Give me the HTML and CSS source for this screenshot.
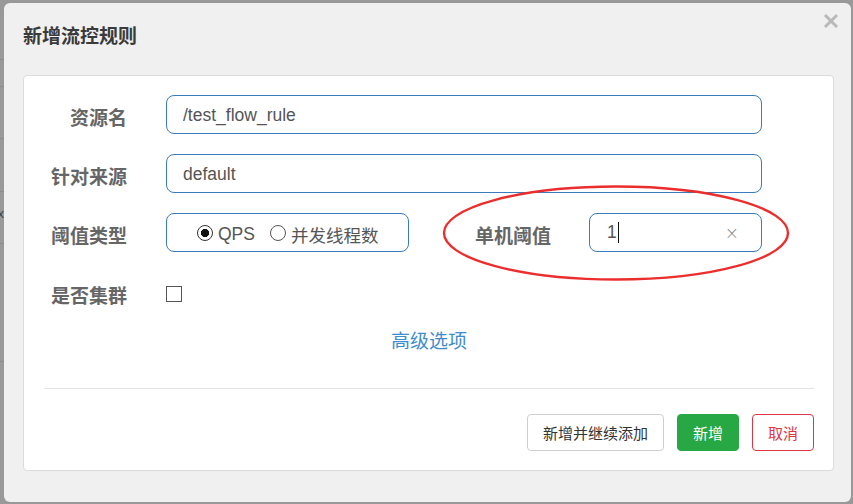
FILE: index.html
```html
<!DOCTYPE html>
<html lang="zh-CN">
<head>
  <meta charset="UTF-8">
  <meta name="viewport" content="width=device-width, initial-scale=1.0">
  <title>新增流控规则</title>
  <link rel="stylesheet" href="styles.css">
</head>
<body>
  <div class="backdrop-strip">
    <div class="strip-row" style="height: 60px"></div>
    <div class="strip-row" style="height: 27px"></div>
    <div class="strip-row" style="height: 52px"></div>
    <div class="strip-row" style="height: 53px"></div>
    <div class="strip-row strip-text" style="height: 52px">x</div>
    <div class="strip-row" style="height: 118px"></div>
  </div>

  <div class="modal">
    <div class="modal-header">
      <h3 class="modal-title">新增流控规则</h3>
      <button class="close-btn" aria-label="关闭">
        <svg width="16" height="16" viewBox="0 0 16 16">
          <path d="M2 2 L14 14 M14 2 L2 14" stroke="#b9b9b9" stroke-width="3" fill="none"/>
        </svg>
      </button>
    </div>

    <div class="panel">
      <form class="rule-form">
        <div class="form-row">
          <label class="form-label">资源名</label>
          <input class="text-input wide" type="text" value="/test_flow_rule">
        </div>

        <div class="form-row">
          <label class="form-label">针对来源</label>
          <input class="text-input wide" type="text" value="default">
        </div>

        <div class="form-row">
          <label class="form-label">阈值类型</label>
          <div class="radio-box">
            <label class="radio-item"><input type="radio" name="grade" checked> <span>QPS</span></label>
            <label class="radio-item"><input type="radio" name="grade"> <span>并发线程数</span></label>
          </div>
          <label class="form-label second">单机阈值</label>
          <div class="text-input clearable">
            <span class="value">1</span><span class="caret"></span>
            <span class="clear">×</span>
          </div>
        </div>

        <div class="form-row cluster-row">
          <label class="form-label">是否集群</label>
          <input class="check" type="checkbox">
        </div>

        <div class="advanced"><a href="#">高级选项</a></div>
      </form>

      <div class="divider"></div>

      <div class="footer">
        <button class="btn btn-default">新增并继续添加</button>
        <button class="btn btn-success">新增</button>
        <button class="btn btn-cancel">取消</button>
      </div>
    </div>
  </div>

  <svg class="annotation" width="352" height="100" viewBox="0 0 352 100">
    <ellipse cx="175" cy="49" rx="172" ry="46.5" stroke="#ec2d2d" stroke-width="2.4" fill="none"/>
  </svg>
</body>
</html>
```

FILE: styles.css
```css
* {
  box-sizing: border-box;
  margin: 0;
  padding: 0;
}

body {
  display: flex;
  height: 504px;
  overflow: hidden;
  background: #999999;
  font-family: 'Liberation Sans', 'Noto Sans CJK SC', sans-serif;
  color: #555;
  position: relative;
}

.backdrop-strip {
  width: 4px;
  flex: none;
}

.strip-row {
  border-bottom: 1px solid #8d8d8d;
  overflow: hidden;
}

.strip-text {
  font-size: 13px;
  color: #444;
  text-align: right;
  line-height: 44px;
  white-space: nowrap;
  direction: rtl;
}

.modal {
  width: 847px;
  height: 499px;
  margin-top: 3px;
  padding: 0 17px 0 19px;
  background: #f0f0f0;
  border-radius: 6px;
}

.modal-header {
  display: flex;
  justify-content: space-between;
  align-items: flex-start;
  height: 72px;
  padding-top: 10px;
}

.modal-title {
  margin-top: 10px;
  font-size: 19px;
  line-height: 27px;
  font-weight: bold;
  color: #3a3a3a;
}

.close-btn {
  margin-top: 0;
  margin-right: -5px;
  background: none;
  border: none;
  line-height: 0;
}

.panel {
  background: #ffffff;
  border: 1px solid #dcdcdc;
  border-radius: 4px;
  padding: 19px 19px 19px 20px;
}

.form-row {
  display: flex;
  align-items: center;
  height: 39px;
  margin-bottom: 20px;
}

.form-label {
  width: 83px;
  margin-right: 39px;
  padding-top: 4px;
  text-align: right;
  font-size: 19px;
  font-weight: bold;
  color: #666;
  white-space: nowrap;
}

.form-label.second {
  width: 142px;
  margin-right: 38px;
}

.text-input {
  height: 39px;
  border: 1px solid #3a7cbd;
  border-radius: 8px;
  padding: 2px 16px 0;
  font-family: 'Liberation Sans', 'Noto Sans CJK SC', sans-serif;
  font-size: 17.5px;
  color: #555;
  outline: none;
}

.text-input.wide {
  width: 596px;
}

.clearable {
  width: 173px;
  display: flex;
  align-items: center;
  padding: 0 0 0 17px;
}

.caret {
  display: inline-block;
  width: 1px;
  height: 21px;
  margin-left: 1px;
  background: #111;
}

.clear {
  margin-left: auto;
  margin-right: 22px;
  font-size: 17px;
  color: #8a8a8a;
  font-family: 'DejaVu Sans', sans-serif;
  font-weight: 200;
}

.radio-box {
  width: 243px;
  height: 39px;
  border: 1px solid #3a7cbd;
  border-radius: 8px;
  display: flex;
  align-items: center;
  padding-left: 30px;
  gap: 15px;
  font-size: 17.5px;
  color: #555;
}

.radio-item {
  display: flex;
  align-items: center;
  gap: 5px;
}

.radio-item span {
  padding-top: 3px;
}

.radio-item input {
  appearance: none;
  width: 16px;
  height: 16px;
  border: 1px solid #555;
  border-radius: 50%;
  background: #fff;
}

.radio-item input:checked {
  border-color: #333;
  background: radial-gradient(circle, #111 0 3.8px, #fff 4.4px);
}

.cluster-row {
  margin-top: 22px;
  margin-bottom: 0;
}

.cluster-row .form-label {
  padding-top: 1px;
}

.check {
  appearance: none;
  width: 16px;
  height: 16px;
  border: 1px solid #555;
  background: #fff;
}

.advanced {
  margin-top: 15px;
  text-align: center;
  line-height: 28px;
  font-size: 19px;
}

.advanced a {
  color: #3f8ccc;
  text-decoration: none;
}

.divider {
  margin-top: 32px;
  border-top: 1px solid #e3e3e3;
}

.footer {
  display: flex;
  justify-content: flex-end;
  gap: 13px;
  margin-top: 25px;
}

.btn {
  height: 37px;
  padding: 0 15px;
  border-radius: 4px;
  font-family: 'Liberation Sans', 'Noto Sans CJK SC', sans-serif;
  font-size: 15px;
  cursor: pointer;
}

.btn-default {
  background: #fff;
  border: 1px solid #cfcfcf;
  color: #333;
}

.btn-success {
  background: #28a745;
  border: 1px solid #28a745;
  color: #fff;
}

.btn-cancel {
  background: #fff;
  border: 1px solid #dc3545;
  color: #dc3545;
}

.annotation {
  position: absolute;
  left: 441px;
  top: 184px;
  pointer-events: none;
}
```
